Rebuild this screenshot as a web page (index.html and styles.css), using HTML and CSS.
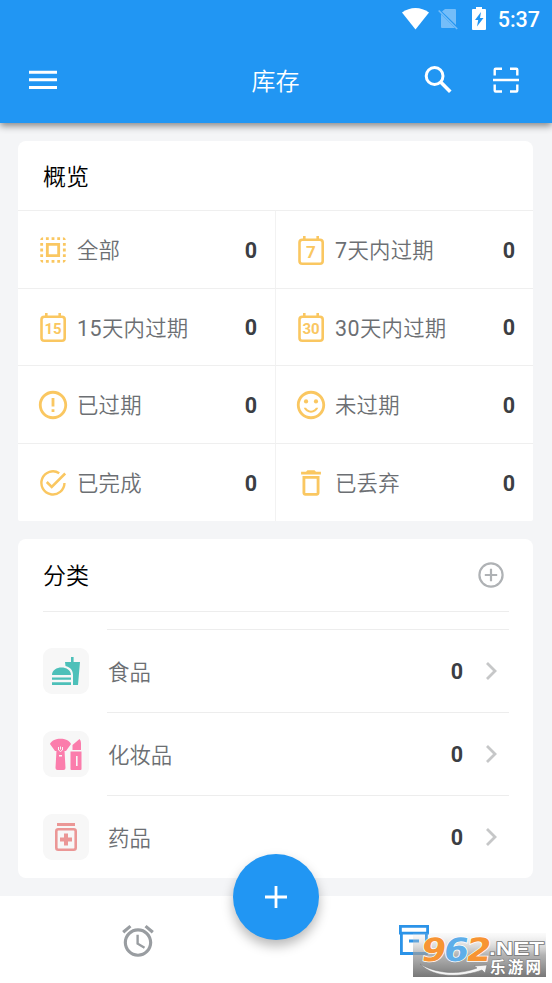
FILE: index.html
```html
<!DOCTYPE html>
<html lang="zh-CN">
<head>
<meta charset="utf-8">
<title>库存</title>
<link rel="stylesheet" href="styles.css">
</head>
<body>
<div class="app">
  <header class="header">
    <div class="status">
      <svg class="wifi" width="27" height="22" viewBox="0 0 27 22"><path fill="#fff" d="M0 4.500C8-1.500 19-1.500 27 4.500L13.500 21.500z"/></svg>
      <svg class="sim" width="20" height="22" viewBox="0 0 20 22"><path fill="#74bdf9" d="M7 1h10q1 0 1 1v15L4 3.500zM3 6l14 14H4q-1 0-1-1z"/><path d="M.7 2.500l18.500 18.500" stroke="#74bdf9" stroke-width="1.600"/></svg>
      <svg class="battery" width="14" height="23" viewBox="0 0 14 23"><path fill="#fff" d="M4 0h6v2h3q1 0 1 1v19q0 1-1 1H1q-1 0-1-1V3q0-1 1-1h3z"/><path fill="#2196f3" d="M9 5L3 13h3.200L5 19.500 11.500 11H8z"/></svg>
      <span class="time">5:37</span>
    </div>
    <div class="bar">
      <svg class="menu" width="28" height="20" viewBox="0 0 28 20"><path fill="#fff" d="M0 .7h28v3H0zM0 8.300h28v3H0zM0 16h28v3H0z"/></svg>
      <h1 class="title">库存</h1>
      <div class="actions">
        <svg width="28" height="28" viewBox="0 0 28 28" fill="none" stroke="#fff"><circle cx="10.600" cy="10" r="8.400" stroke-width="3"/><path d="M16.600 16l9.700 9.700" stroke-width="3.600"/></svg>
        <svg width="28" height="28" viewBox="0 0 28 28" fill="none" stroke="#fff" stroke-width="2.400"><path d="M2.700 9.500V3.700q0-1 1-1H10M18 2.700h6.300q1 0 1 1v5.800M25.300 18.500v6q0 1-1 1H18M10 25.500H3.700q-1 0-1-1v-6M1 14h26"/></svg>
      </div>
    </div>
  </header>

  <main class="content">
    <section class="card overview">
      <h2 class="card-title">概览</h2>
      <div class="grid">
        <div class="cell">
          <svg class="icon" viewBox="0 0 24 24"><path d="M3 5h2V3c-1.100 0-2 .9-2 2zm0 8h2v-2H3v2zm4 8h2v-2H7v2zM3 9h2V7H3v2zm10-6h-2v2h2V3zm6 0v2h2c0-1.100-.9-2-2-2zM5 21v-2H3c0 1.100.9 2 2 2zm-2-4h2v-2H3v2zM9 3H7v2h2V3zm2 18h2v-2h-2v2zm8-8h2v-2h-2v2zm0 8c1.100 0 2-.9 2-2h-2v2zm0-12h2V7h-2v2zm0 8h2v-2h-2v2zm-4 4h2v-2h-2v2zm0-16h2V3h-2v2zM7 17h10V7H7v10zm2-8h6v6H9V9z"/></svg>
          <span class="label">全部</span><span class="count">0</span>
        </div>
        <div class="cell">
          <svg class="icon" viewBox="0 0 34 34"><rect class="line" x="5.500" y="6.800" width="23.200" height="24" rx="2.800"/><path class="line" d="M10.300 3v3.500M23.700 3v3.500"/><text x="17" y="24.500" font-size="17">7</text></svg>
          <span class="label"><span class="num">7</span>天内过期</span><span class="count">0</span>
        </div>
        <div class="cell">
          <svg class="icon" viewBox="0 0 34 34"><rect class="line" x="5.500" y="6.800" width="23.200" height="24" rx="2.800"/><path class="line" d="M10.300 3v3.500M23.700 3v3.500"/><text x="17" y="24.300" font-size="15">15</text></svg>
          <span class="label"><span class="num">15</span>天内过期</span><span class="count">0</span>
        </div>
        <div class="cell">
          <svg class="icon" viewBox="0 0 34 34"><rect class="line" x="5.500" y="6.800" width="23.200" height="24" rx="2.800"/><path class="line" d="M10.300 3v3.500M23.700 3v3.500"/><text x="17" y="24.300" font-size="15">30</text></svg>
          <span class="label"><span class="num">30</span>天内过期</span><span class="count">0</span>
        </div>
        <div class="cell">
          <svg class="icon" viewBox="0 0 24 24"><path d="M11 15h2v2h-2zm0-8h2v6h-2zm.99-5C6.470 2 2 6.480 2 12s4.470 10 9.990 10C17.520 22 22 17.520 22 12S17.520 2 11.990 2zM12 20c-4.420 0-8-3.580-8-8s3.580-8 8-8 8 3.580 8 8-3.580 8-8 8z"/></svg>
          <span class="label">已过期</span><span class="count">0</span>
        </div>
        <div class="cell">
          <svg class="icon" viewBox="0 0 24 24"><circle cx="15.500" cy="9.500" r="1.500"/><circle cx="8.500" cy="9.500" r="1.500"/><path d="M12 16c-1.480 0-2.750-.81-3.450-2H6.880c.8 2.050 2.790 3.500 5.120 3.500s4.320-1.450 5.120-3.500h-1.670c-.69 1.190-1.970 2-3.450 2zm-.01-14C6.470 2 2 6.480 2 12s4.470 10 9.990 10C17.520 22 22 17.520 22 12S17.520 2 11.990 2zM12 20c-4.420 0-8-3.580-8-8s3.580-8 8-8 8 3.580 8 8-3.580 8-8 8z"/></svg>
          <span class="label">未过期</span><span class="count">0</span>
        </div>
        <div class="cell">
          <svg class="icon" viewBox="0 0 24 24"><g fill="none" stroke="#fac761"><path stroke-width="1.700" d="M16.400 5.100A8.150 8.150 0 1 0 20.100 12"/><path stroke-width="1.800" d="M7.600 11.300l3.500 3.500 9.500-9.500"/></g></svg>
          <span class="label">已完成</span><span class="count">0</span>
        </div>
        <div class="cell">
          <svg class="icon" viewBox="0 0 24 24"><path d="M6 19c0 1.100.9 2 2 2h8c1.100 0 2-.9 2-2V7H6v12zM8 9h8v10H8V9zm7.500-5l-1-1h-5l-1 1H5v2h14V4z"/></svg>
          <span class="label">已丢弃</span><span class="count">0</span>
        </div>
      </div>
    </section>

    <section class="card categories">
      <div class="cat-head">
        <h2 class="card-title">分类</h2>
        <svg width="26" height="26" viewBox="0 0 26 26" fill="none" stroke="#afb2b5" stroke-width="2.200"><circle cx="13" cy="13" r="11.600"/><path d="M13 6.800v12.400M6.800 13h12.400"/></svg>
      </div>
      <div class="row">
        <div class="tile">
          <svg width="46" height="46" viewBox="0 0 46 46" fill="#4dc0b9"><path d="M22 14h6V9h2.600v5H37l-2 23h-5V27c0-5-3-8-7.500-9zM9 27c0-10 19-10 19 0zM9 29.500h19v2.300H9zM9 34.300h19V37H9z"/></svg>
        </div>
        <div class="row-body">
          <span class="label">食品</span><span class="count">0</span>
          <svg class="chevron" width="12" height="20" viewBox="0 0 12 20"><path d="M2 2l8 8-8 8"/></svg>
        </div>
      </div>
      <div class="row">
        <div class="tile">
          <svg width="46" height="46" viewBox="0 0 46 46" fill="#fb7dac"><path d="M7 13C10 6 25 6 28 13l-5 7h-11zM13.500 19h8l1 18q0 2-2 2h-6q-2 0-2-2z"/><path d="M29.500 19v-5l7-6q1.500 1.500 1.500 4v7zM27.500 20.500H38.500V38q0 1-1 1h-9q-1 0-1-1z"/><path fill="none" stroke="#f7f7f7" stroke-width="1" d="M15.500 16v3q2 3 4 0v-3M17.500 15.500v3"/><path fill="#f7f7f7" d="M16 24h3v1.500h-3zM33 25h1.600v10h-1.600z"/></svg>
        </div>
        <div class="row-body">
          <span class="label">化妆品</span><span class="count">0</span>
          <svg class="chevron" width="12" height="20" viewBox="0 0 12 20"><path d="M2 2l8 8-8 8"/></svg>
        </div>
      </div>
      <div class="row">
        <div class="tile">
          <svg width="46" height="46" viewBox="0 0 46 46" fill="#eb9796"><path d="M14 9h18v3H14z"/><rect x="13.300" y="15.300" width="19.400" height="20.400" rx="2" fill="none" stroke="#eb9796" stroke-width="2.600"/><path d="M21 19.500h4v4h4v4h-4v4h-4v-4h-4v-4h4z"/></svg>
        </div>
        <div class="row-body">
          <span class="label">药品</span><span class="count">0</span>
          <svg class="chevron" width="12" height="20" viewBox="0 0 12 20"><path d="M2 2l8 8-8 8"/></svg>
        </div>
      </div>
    </section>
  </main>

  <nav class="tabs">
    <div class="tab"><svg width="38" height="38" viewBox="0 0 24 24" fill="#999da1"><path d="M22 5.720l-4.600-3.860-1.290 1.530 4.600 3.860L22 5.720zM7.880 3.390L6.600 1.860 2 5.710l1.290 1.530 4.590-3.850zM12.500 8H11v6l4.750 2.850.75-1.230-4-2.370V8zM12 4c-4.970 0-9 4.030-9 9s4.020 9 9 9c4.970 0 9-4.030 9-9s-4.030-9-9-9zm0 16c-3.870 0-7-3.130-7-7s3.130-7 7-7 7 3.130 7 7-3.130 7-7 7z"/></svg></div>
    <div class="tab"><svg width="32" height="32" viewBox="0 0 32 32" fill="none" stroke="#2b93e8" stroke-width="2.800"><path d="M2.400 1.400h27.200v6.800H2.400zM3.400 8.500v20h25v-20M11 16h10"/></svg></div>
  </nav>

  <button class="fab"><svg width="22" height="22" viewBox="0 0 22 22"><path d="M11 0v22M0 11h22" stroke="#fff" stroke-width="2.800"/></svg></button>

  <svg class="watermark" width="133" height="44" viewBox="0 0 133 44">
    <defs><linearGradient id="shade" x1="0" y1="0" x2="0" y2="1"><stop offset="0" stop-color="#ddd" stop-opacity=".12"/><stop offset=".5" stop-color="#999" stop-opacity=".75"/><stop offset="1" stop-color="#777"/></linearGradient></defs>
    <rect width="133" height="44" fill="url(#shade)"/>
    <path d="M7 31C22 46 50 44 69 37l3 3 2-8-13 1 3 2C46 42 24 41 7 31z" fill="#f4f4f4" stroke="#777" stroke-width=".5"/>
    <g class="wm-num" transform="translate(4 0) skewX(-9)"><text x="7" y="27.500" textLength="25" lengthAdjust="spacingAndGlyphs" fill="#f79433">9</text><text x="29.500" y="27.500" textLength="25" lengthAdjust="spacingAndGlyphs" fill="#5eaee9">6</text><text x="52" y="27.500" textLength="25" lengthAdjust="spacingAndGlyphs" fill="#f79433">2</text></g>
    <text class="wm-net" x="76" y="21.500" textLength="55" lengthAdjust="spacingAndGlyphs">.NET</text>
    <text class="wm-cn" x="77" y="39.500" textLength="51">乐游网</text>
  </svg>
</div>
</body>
</html>
```
FILE: styles.css
```css
* { box-sizing: border-box; }
body {
  margin: 0;
  font-family: Roboto, "Noto Sans CJK SC", sans-serif;
  background: #f4f5f7;
}
h1, h2 { margin: 0; }
svg { display: block; flex: none; }
.app {
  position: relative;
  width: 552px;
  height: 983px;
  overflow: hidden;
  display: flex;
  flex-direction: column;
}
.header {
  flex: none;
  height: 123px;
  background: #2196f3;
  box-shadow: 0 3px 7px rgba(0, 0, 0, .45);
  color: #fff;
}
.status {
  height: 38px;
  padding-right: 12px;
  display: flex;
  align-items: center;
  justify-content: flex-end;
}
.wifi, .sim, .battery { margin-bottom: 1px; }
.sim { margin-left: 9px; }
.battery { margin-left: 14px; }
.time { margin-left: 12px; padding-top: 2px; font-size: 21.5px; font-weight: 500; line-height: 38px; }
.bar {
  height: 84px;
  padding: 0 32px 0 29px;
  display: grid;
  grid-template-columns: 1fr auto 1fr;
  align-items: center;
}
.title { font-size: 24px; line-height: 36px; font-weight: 350; padding: 4px 0 0 2px; }
.actions { display: flex; gap: 40px; justify-content: flex-end; }
.content {
  flex: 1;
  padding: 18px 19px 18px 18px;
  display: flex;
  flex-direction: column;
  gap: 18px;
}
.card { background: #fff; border-radius: 8px; overflow: hidden; }
.card-title { font-size: 23px; color: #000; font-weight: 350; line-height: 36px; }
.overview { height: 380px; border-radius: 8px 8px 2px 2px; }
.overview .card-title { height: 69px; padding: 19px 25px 0; }
.grid {
  display: grid;
  grid-template-columns: 258px 257px;
  grid-template-rows: 78px 77px 78px 78px;
}
.cell {
  display: flex;
  align-items: center;
  padding: 0 18px 0 18.3px;
  border-top: 1px solid #efefef;
}
.cell:nth-child(odd) { border-right: 1px solid #f2f2f2; }
.icon { width: 34px; height: 34px; margin-right: 6.7px; fill: #fac761; }
.icon .line { fill: none; stroke: #fac761; stroke-width: 2.6; }
.icon text { font-weight: 700; text-anchor: middle; }
.label {
  flex: 1;
  padding-top: 3px;
  font-size: 21.4px;
  font-weight: 350;
  color: #6c6f73;
  line-height: 30px;
  white-space: nowrap;
}
.cell .label { letter-spacing: .2px; }
.num { font-weight: 400; letter-spacing: .5px; }
.count { padding-top: 1px; font-size: 21.5px; font-weight: 700; color: #3b3e43; }
.row .count { padding-top: 0; }
.categories { height: 339px; padding: 0 24px 0 25px; }
.cat-head {
  height: 73px;
  padding: 0 5px 0 0;
  border-bottom: 1px solid #ededed;
  display: flex;
  align-items: center;
  justify-content: space-between;
  margin-bottom: 17px;
}
.cat-head .card-title { padding-top: 4px; }
.row { display: flex; align-items: center; gap: 18px; height: 83px; }
.tile { width: 46px; height: 46px; border-radius: 9px; background: #f7f7f7; }
.row-body {
  flex: 1;
  height: 83px;
  display: flex;
  align-items: center;
  border-top: 1px solid #ededed;
  padding: 0 12px 0 1px;
}
.chevron { margin-left: 22px; fill: none; stroke: #c6c7c8; stroke-width: 2.8; }
.tabs { flex: none; height: 87px; background: #fff; display: flex; }
.tab { flex: 1; display: flex; align-items: center; justify-content: center; padding-top: 3px; }
.fab {
  position: absolute;
  left: 233px;
  top: 854px;
  width: 86px;
  height: 86px;
  padding: 0;
  border: 0;
  border-radius: 50%;
  background: #2196f3;
  display: flex;
  align-items: center;
  justify-content: center;
  box-shadow: 0 6px 12px rgba(0, 0, 0, .28);
}
.watermark { position: absolute; left: 413px; top: 933px; }
.wm-num { font: 700 32px "DejaVu Sans", sans-serif; stroke: #fff; stroke-width: 1.5; paint-order: stroke; }
.wm-net { font: 700 19px "Liberation Sans", sans-serif; fill: #fff; stroke: #777; stroke-width: 1.5; paint-order: stroke; }
.wm-cn { font: 700 15.5px/1 "Noto Sans CJK SC", sans-serif; fill: #fff; stroke: #777; stroke-width: 1; paint-order: stroke; }
```
